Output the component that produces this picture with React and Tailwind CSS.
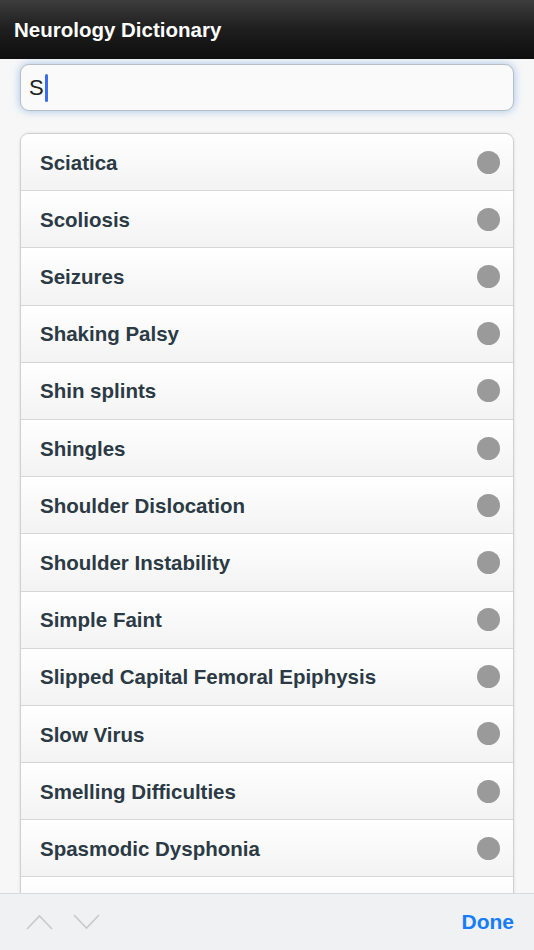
import React, { useState } from 'react';

const terms = [
  'Sciatica',
  'Scoliosis',
  'Seizures',
  'Shaking Palsy',
  'Shin splints',
  'Shingles',
  'Shoulder Dislocation',
  'Shoulder Instability',
  'Simple Faint',
  'Slipped Capital Femoral Epiphysis',
  'Slow Virus',
  'Smelling Difficulties',
  'Spasmodic Dysphonia',
];

const App = () => {
  const [query, setQuery] = useState('S');

  return (
    <div
      className="flex h-[950px] w-[534px] flex-col overflow-hidden bg-[#f7f7f7]"
      style={{ fontFamily: '"Liberation Sans", Arial, sans-serif' }}
    >
      {/* header */}
      <div className="flex h-[59px] shrink-0 items-center bg-gradient-to-b from-[#3d3d3d] via-[#1e1e1e] to-[#0e0e0e] px-[14px] pt-[2px]">
        <h1 className="text-[20.5px] font-bold text-white">Neurology Dictionary</h1>
      </div>

      {/* content */}
      <div className="flex-1 overflow-hidden px-[20px] pt-[5px]">
        <div className="flex h-[47px] items-center rounded-[9px] border border-[#b9bdc4] bg-[#fafafa] px-[8px] shadow-[0_0_8px_rgba(90,150,220,0.55)]">
          <span className="text-[22px] leading-none text-[#222]">{query}</span>
          <span className="ml-[1px] h-[28px] w-[3px] rounded-sm bg-[#3b6cf0]" />
        </div>

        <ul className="mt-[22px] overflow-hidden rounded-t-[9px] border-x border-t border-[#d0d0d0] bg-white shadow-[0_0_3px_rgba(0,0,0,0.12)]">
          {terms.map((term) => (
            <li
              key={term}
              onClick={() => setQuery(term)}
              className="flex h-[57.2px] items-center justify-between border-b border-[#d7d7d7] bg-gradient-to-b from-white to-[#f3f3f3] pl-[19px] pr-[13px]"
            >
              <span className="pt-[2px] text-[20.5px] font-bold text-[#2b3a44]">{term}</span>
              <span className="h-[23px] w-[23px] rounded-full bg-[#9a9a9a]" />
            </li>
          ))}
          <li className="h-[57px] bg-gradient-to-b from-white to-[#f3f3f3]" />
        </ul>
      </div>

      {/* keyboard toolbar */}
      <div className="flex h-[57px] shrink-0 items-center justify-between border-t border-[#d9dadd] bg-[#f0f1f3] pl-[26px] pr-[20px]">
        <div className="flex items-center gap-[20px]">
          <svg width="27" height="16" viewBox="0 0 27 16" fill="none" stroke="#c9c9cb" strokeWidth="1.6">
            <path d="M1 15 L13.5 2 L26 15" />
          </svg>
          <svg width="27" height="16" viewBox="0 0 27 16" fill="none" stroke="#c9c9cb" strokeWidth="1.6">
            <path d="M1 1 L13.5 14 L26 1" />
          </svg>
        </div>
        <button className="text-[21px] font-bold text-[#167cf7]">Done</button>
      </div>
    </div>
  );
};

export default App;
